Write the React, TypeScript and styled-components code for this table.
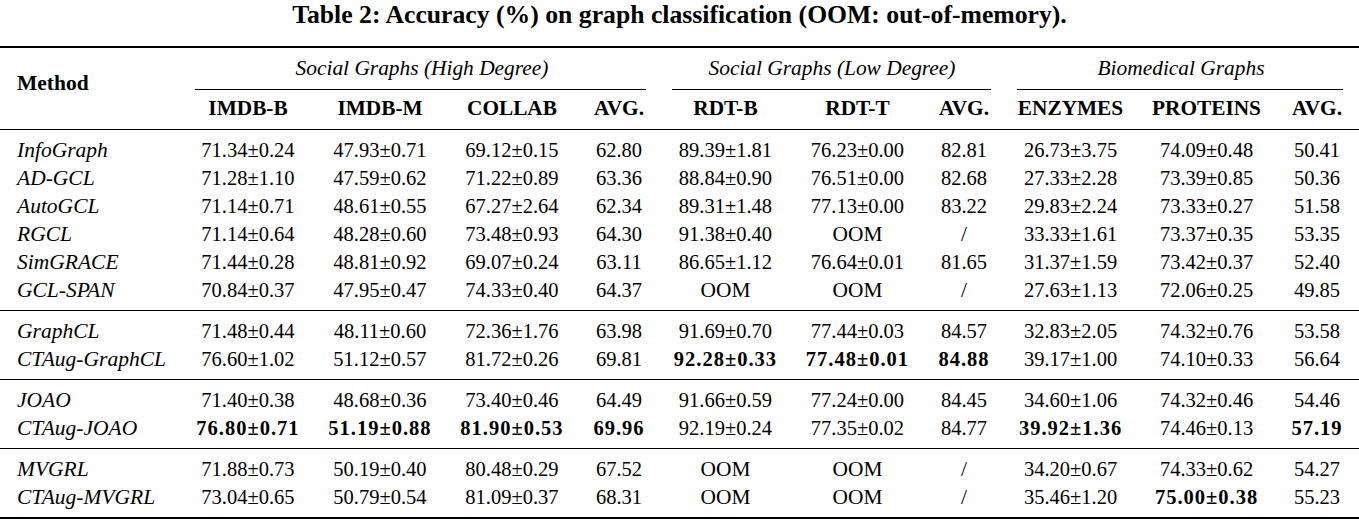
import React from "react";
import styled, { createGlobalStyle } from "styled-components";

const GlobalStyle = createGlobalStyle`
  html, body {
    margin: 0;
    padding: 0;
    background: #fff;
  }
  body {
    font-family: "Liberation Serif", "Times New Roman", serif;
    color: #000;
  }
`;

const colWidths = [183, 130, 134, 130, 84, 129, 135, 78, 135, 137, 84];

const groups = [
  { name: "Social Graphs (High Degree)", span: 4, l: 12, r: 15 },
  { name: "Social Graphs (Low Degree)", span: 3, l: 11, r: 12 },
  { name: "Biomedical Graphs", span: 3, l: 14, r: 16 },
];

const columns = [
  "IMDB-B", "IMDB-M", "COLLAB", "AVG.",
  "RDT-B", "RDT-T", "AVG.",
  "ENZYMES", "PROTEINS", "AVG.",
];

// a leading * marks a bold (best) result
const sections: string[][][] = [
  [
    ["InfoGraph", "71.34±0.24", "47.93±0.71", "69.12±0.15", "62.80", "89.39±1.81", "76.23±0.00", "82.81", "26.73±3.75", "74.09±0.48", "50.41"],
    ["AD-GCL", "71.28±1.10", "47.59±0.62", "71.22±0.89", "63.36", "88.84±0.90", "76.51±0.00", "82.68", "27.33±2.28", "73.39±0.85", "50.36"],
    ["AutoGCL", "71.14±0.71", "48.61±0.55", "67.27±2.64", "62.34", "89.31±1.48", "77.13±0.00", "83.22", "29.83±2.24", "73.33±0.27", "51.58"],
    ["RGCL", "71.14±0.64", "48.28±0.60", "73.48±0.93", "64.30", "91.38±0.40", "OOM", "/", "33.33±1.61", "73.37±0.35", "53.35"],
    ["SimGRACE", "71.44±0.28", "48.81±0.92", "69.07±0.24", "63.11", "86.65±1.12", "76.64±0.01", "81.65", "31.37±1.59", "73.42±0.37", "52.40"],
    ["GCL-SPAN", "70.84±0.37", "47.95±0.47", "74.33±0.40", "64.37", "OOM", "OOM", "/", "27.63±1.13", "72.06±0.25", "49.85"],
  ],
  [
    ["GraphCL", "71.48±0.44", "48.11±0.60", "72.36±1.76", "63.98", "91.69±0.70", "77.44±0.03", "84.57", "32.83±2.05", "74.32±0.76", "53.58"],
    ["CTAug-GraphCL", "76.60±1.02", "51.12±0.57", "81.72±0.26", "69.81", "*92.28±0.33", "*77.48±0.01", "*84.88", "39.17±1.00", "74.10±0.33", "56.64"],
  ],
  [
    ["JOAO", "71.40±0.38", "48.68±0.36", "73.40±0.46", "64.49", "91.66±0.59", "77.24±0.00", "84.45", "34.60±1.06", "74.32±0.46", "54.46"],
    ["CTAug-JOAO", "*76.80±0.71", "*51.19±0.88", "*81.90±0.53", "*69.96", "92.19±0.24", "77.35±0.02", "84.77", "*39.92±1.36", "74.46±0.13", "*57.19"],
  ],
  [
    ["MVGRL", "71.88±0.73", "50.19±0.40", "80.48±0.29", "67.52", "OOM", "OOM", "/", "34.20±0.67", "74.33±0.62", "54.27"],
    ["CTAug-MVGRL", "73.04±0.65", "50.79±0.54", "81.09±0.37", "68.31", "OOM", "OOM", "/", "35.46±1.20", "*75.00±0.38", "55.23"],
  ],
];

const App = (): JSX.Element => {
  return (
    <Page>
      <GlobalStyle />
      <Title>Table 2: Accuracy (%) on graph classification (OOM: out-of-memory).</Title>
      <Table>
        <colgroup>
          {colWidths.map((w, i) => (
            <Col key={i} $w={w} />
          ))}
        </colgroup>
        <thead>
          <tr>
            <MethodHead rowSpan={2}>Method</MethodHead>
            {groups.map((g) => (
              <GroupHead key={g.name} colSpan={g.span}>
                <GroupLabel>{g.name}</GroupLabel>
                <CmidRule $l={g.l} $r={g.r} />
              </GroupHead>
            ))}
          </tr>
          <tr>
            {columns.map((c, i) => (
              <ColHead key={i}>{c}</ColHead>
            ))}
          </tr>
        </thead>
        {sections.map((rows, si) => (
          <Section key={si} $last={si === sections.length - 1}>
            {rows.map((row) => (
              <Row key={row[0]}>
                <MethodCell>{row[0]}</MethodCell>
                {row.slice(1).map((v, ci) => {
                  const bold = v.startsWith("*");
                  const text = bold ? v.slice(1) : v;
                  const isWord = text === "OOM" || text === "/";
                  return (
                    <ValueCell key={ci} $bold={bold} $word={isWord}>
                      {text}
                    </ValueCell>
                  );
                })}
              </Row>
            ))}
          </Section>
        ))}
      </Table>
    </Page>
  );
};

export default App;

const Page = styled.div`
  width: 1359px;
`;

const Title = styled.div`
  font-weight: bold;
  font-size: 25.7px;
  line-height: 30px;
  text-align: center;
  padding-bottom: 16px;
`;

const Table = styled.table`
  width: 1359px;
  table-layout: fixed;
  border-collapse: collapse;
  border-top: 2px solid #000;
`;

const Col = styled.col<{ $w: number }>`
  width: ${(p) => p.$w}px;
`;

const MethodHead = styled.th`
  text-align: left;
  vertical-align: middle;
  font-weight: bold;
  font-size: 21.5px;
  padding: 0 0 11px 17px;
  border-bottom: 1px solid #000;
`;

const GroupHead = styled.th`
  padding: 0;
  font-weight: normal;
`;

const GroupLabel = styled.div`
  font-style: italic;
  font-size: 21.4px;
  height: 41px;
  line-height: 41px;
  text-align: center;
  white-space: nowrap;
`;

const CmidRule = styled.div<{ $l: number; $r: number }>`
  height: 1px;
  background: #000;
  margin: 0 ${(p) => p.$r}px 0 ${(p) => p.$l}px;
`;

const ColHead = styled.th`
  font-weight: bold;
  font-size: 21.3px;
  line-height: 36px;
  padding: 0 0 3px;
  text-align: center;
  white-space: nowrap;
  border-bottom: 1px solid #000;
`;

const Section = styled.tbody<{ $last?: boolean }>`
  border-bottom: ${(p) => (p.$last ? 2 : 1)}px solid #000;

  tr:first-child td {
    padding-top: 6px;
  }
  tr:last-child td {
    padding-bottom: 6px;
  }
`;

const Row = styled.tr``;

const MethodCell = styled.td`
  font-style: italic;
  font-size: 21.5px;
  line-height: 28px;
  padding: 0 0 0 17px;
  white-space: nowrap;
`;

const ValueCell = styled.td<{ $bold?: boolean; $word?: boolean }>`
  text-align: center;
  white-space: nowrap;
  line-height: 28px;
  padding: 0;
  font-size: ${(p) => (p.$word ? 21.4 : 20.5)}px;
  font-weight: ${(p) => (p.$bold ? "bold" : "normal")};
  letter-spacing: ${(p) => (p.$bold ? 1 : 0)}px;
`;
